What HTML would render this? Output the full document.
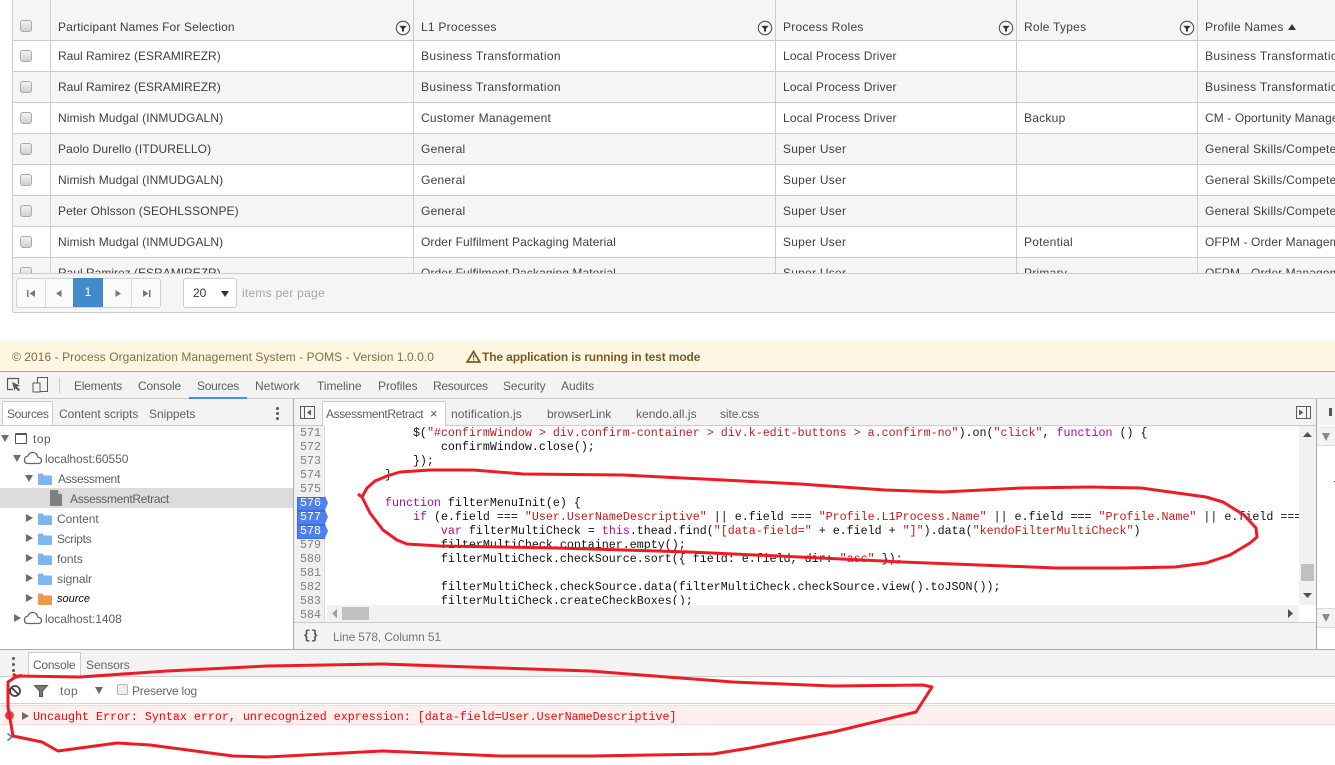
<!DOCTYPE html>
<html><head><meta charset="utf-8"><title>POMS</title>
<style>
html,body{margin:0;padding:0;background:#fff;overflow:hidden}
body{position:relative;width:1335px;height:765px;font-family:"Liberation Sans",Arial,sans-serif;font-size:12px;color:#555}
#w{position:absolute;left:0;top:0;width:1335px;height:765px;overflow:hidden}
.a{position:absolute}
.t{position:absolute;white-space:nowrap;line-height:16px}
.g{font-size:12px;letter-spacing:.25px;color:#3f3f3f}
.g.x0{letter-spacing:0}.g.x1{letter-spacing:.1px}.g.x2{letter-spacing:.15px}.g.x3{letter-spacing:.34px}
.row{position:absolute;left:13px;width:1322px;height:30px;border-bottom:1px solid #ccc}
.alt{background:#f5f5f5}
.v{position:absolute;top:0;width:1px;height:273px;background:#ccc}
.cb{position:absolute;left:20px;width:10px;height:10px;border:1px solid #aaa;border-radius:3px;background:linear-gradient(#f2f2f2,#cfcfcf)}
.d{color:#5f5f5f;font-size:12px;letter-spacing:-.05px}
.e{letter-spacing:-.35px}
.m{font-family:"Liberation Mono",monospace;font-size:11.67px;line-height:14px;white-space:pre;position:absolute;color:#111}
.s{color:#c41a16}.k{color:#aa0d91}
.n{position:absolute;left:294px;width:27px;text-align:right;font-family:"Liberation Mono",monospace;font-size:11.67px;line-height:14px;color:#808080}
.bp{position:absolute;left:297px;width:27px;height:12px;background:#4f80f0;border:1px solid #3a6ce0;border-right:none}
.bt{position:absolute;left:325px;width:0;height:0;border-left:3px solid #4f80f0;border-top:7px solid transparent;border-bottom:7px solid transparent}
.tw{position:absolute;width:0;height:0}
.r{border-left:7px solid #6e6e6e;border-top:4.5px solid transparent;border-bottom:4.5px solid transparent}
.dn{border-top:7px solid #6e6e6e;border-left:4.5px solid transparent;border-right:4.5px solid transparent}
.dot{position:absolute;width:3px;height:3px;border-radius:50%;background:#5a5a5a}
</style></head><body><div id="w">
<svg width="0" height="0" style="position:absolute"><defs>
<symbol id="fi" viewBox="0 0 16 16"><circle cx="8" cy="8" r="6.7" fill="none" stroke="#444" stroke-width="1"/><path d="M4.300 5.900h7.400L9 8.800v2.700H7V8.800z" fill="#333"/></symbol>
<symbol id="fo" viewBox="0 0 14 12"><path d="M0 1.500Q0 .5 1 .5h3.500l1.500 2h7q1 0 1 1V11q0 1-1 1H1q-1 0-1-1z" fill="currentColor"/></symbol>
<symbol id="cl" viewBox="0 0 20 14"><path d="M5 12.500H15Q18.500 12.500 18.500 9.500Q18.500 6.500 15 6.500Q14 1.500 9.500 1.500Q6 1.500 5 5Q1.500 5.500 1.500 9Q1.500 12.500 5 12.500Z" fill="#fff" stroke="#666" stroke-width="1.300"/></symbol>
</defs></svg>

<!-- GRID -->
<div class="a" style="left:12px;top:0;width:1323px;height:40px;background:#f5f5f5;border-bottom:1px solid #ccc"></div>
<div class="row" style="top:41px;background:#fff"></div>
<div class="row alt" style="top:72px"></div>
<div class="row" style="top:103px;background:#fff"></div>
<div class="row alt" style="top:134px"></div>
<div class="row" style="top:165px;background:#fff"></div>
<div class="row alt" style="top:196px"></div>
<div class="row" style="top:227px;background:#fff"></div>
<div class="a" style="left:13px;top:258px;width:1322px;height:15px;background:#f5f5f5"></div>
<div class="v" style="left:12px;height:312px"></div><div class="v" style="left:50px"></div><div class="v" style="left:413px"></div><div class="v" style="left:775px"></div><div class="v" style="left:1016px"></div><div class="v" style="left:1197px"></div>

<div class="cb" style="top:20px"></div><div class="cb" style="top:50px"></div><div class="cb" style="top:81px"></div><div class="cb" style="top:112px"></div><div class="cb" style="top:143px"></div><div class="cb" style="top:174px"></div><div class="cb" style="top:205px"></div><div class="cb" style="top:236px"></div><div class="cb" style="top:267px"></div>

<div class="t g x2" style="left:58px;top:19px">Participant Names For Selection</div>
<div class="t g" style="left:421px;top:19px">L1 Processes</div>
<div class="t g" style="left:783px;top:19px">Process Roles</div>
<div class="t g" style="left:1024px;top:19px">Role Types</div>
<div class="t g" style="left:1205px;top:19px">Profile Names</div>
<svg class="a" style="left:1288px;top:24px" width="8" height="7"><path d="M4 0L8 6H0z" fill="#333"/></svg>
<svg class="a" style="left:395px;top:20px" width="16" height="16"><use href="#fi"/></svg>
<svg class="a" style="left:757px;top:20px" width="16" height="16"><use href="#fi"/></svg>
<svg class="a" style="left:998px;top:20px" width="16" height="16"><use href="#fi"/></svg>
<svg class="a" style="left:1179px;top:20px" width="16" height="16"><use href="#fi"/></svg>

<div class="t g x0" style="left:58px;top:48px">Raul Ramirez (ESRAMIREZR)</div><div class="t g x3" style="left:421px;top:48px">Business Transformation</div><div class="t g x2" style="left:783px;top:48px">Local Process Driver</div><div class="t g x3" style="left:1205px;top:48px">Business Transformation</div>
<div class="t g x0" style="left:58px;top:79px">Raul Ramirez (ESRAMIREZR)</div><div class="t g x3" style="left:421px;top:79px">Business Transformation</div><div class="t g x2" style="left:783px;top:79px">Local Process Driver</div><div class="t g x3" style="left:1205px;top:79px">Business Transformation</div>
<div class="t g x1" style="left:58px;top:110px">Nimish Mudgal (INMUDGALN)</div><div class="t g" style="left:421px;top:110px">Customer Management</div><div class="t g x2" style="left:783px;top:110px">Local Process Driver</div><div class="t g" style="left:1024px;top:110px">Backup</div><div class="t g x1" style="left:1205px;top:110px">CM - Oportunity Management</div>
<div class="t g x1" style="left:58px;top:141px">Paolo Durello (ITDURELLO)</div><div class="t g" style="left:421px;top:141px">General</div><div class="t g" style="left:783px;top:141px">Super User</div><div class="t g" style="left:1205px;top:141px">General Skills/Competences</div>
<div class="t g x1" style="left:58px;top:172px">Nimish Mudgal (INMUDGALN)</div><div class="t g" style="left:421px;top:172px">General</div><div class="t g" style="left:783px;top:172px">Super User</div><div class="t g" style="left:1205px;top:172px">General Skills/Competences</div>
<div class="t g x1" style="left:58px;top:203px">Peter Ohlsson (SEOHLSSONPE)</div><div class="t g" style="left:421px;top:203px">General</div><div class="t g" style="left:783px;top:203px">Super User</div><div class="t g" style="left:1205px;top:203px">General Skills/Competences</div>
<div class="t g x1" style="left:58px;top:234px">Nimish Mudgal (INMUDGALN)</div><div class="t g x1" style="left:421px;top:234px">Order Fulfilment Packaging Material</div><div class="t g" style="left:783px;top:234px">Super User</div><div class="t g" style="left:1024px;top:234px">Potential</div><div class="t g x1" style="left:1205px;top:234px">OFPM - Order Management</div>
<div class="t g x0" style="left:58px;top:265px">Raul Ramirez (ESRAMIREZR)</div><div class="t g x1" style="left:421px;top:265px">Order Fulfilment Packaging Material</div><div class="t g" style="left:783px;top:265px">Super User</div><div class="t g" style="left:1024px;top:265px">Primary</div><div class="t g x1" style="left:1205px;top:265px">OFPM - Order Management</div>

<!-- PAGER -->
<div class="a" style="left:12px;top:273px;width:1323px;height:38px;background:#f5f5f5;border-top:1px solid #ccc;border-bottom:1px solid #ccc;border-left:1px solid #ccc;border-bottom-left-radius:3px"></div>
<div class="a" style="left:16px;top:278px;width:143px;height:28px;background:#fafafa;border:1px solid #d0d0d0;border-radius:3px"></div>
<div class="a" style="left:45px;top:279px;width:1px;height:28px;background:#ddd"></div>
<div class="a" style="left:131px;top:279px;width:1px;height:28px;background:#ddd"></div>
<div class="a" style="left:73px;top:278px;width:30px;height:29px;background:#428bca;color:#fff;text-align:center;line-height:29px">1</div>
<svg class="a" style="left:26px;top:289px" width="12" height="9"><path d="M1 1h1.500v7H1zM9 1v7L3.500 4.500z" fill="#777"/></svg>
<svg class="a" style="left:55px;top:289px" width="9" height="9"><path d="M6.500 1v7L1 4.500z" fill="#777"/></svg>
<svg class="a" style="left:114px;top:289px" width="9" height="9"><path d="M1.500 1v7L7 4.500z" fill="#777"/></svg>
<svg class="a" style="left:141px;top:289px" width="12" height="9"><path d="M2 1v7L7.500 4.500zM8 1h1.500v7H8z" fill="#777"/></svg>
<div class="a" style="left:183px;top:278px;width:52px;height:28px;background:#fff;border:1px solid #ccc;border-radius:3px"></div>
<div class="t" style="left:193px;top:285px;color:#333">20</div>
<div class="tw dn" style="left:221px;top:291px;border-top-color:#333;border-top-width:6px;border-left-width:4px;border-right-width:4px"></div>
<div class="t" style="left:242px;top:285px;color:#a6a6a6;letter-spacing:.25px">items per page</div>

<!-- FOOTER -->
<div class="a" style="left:0;top:341px;width:1335px;height:30px;background:#fcf6e3"></div>
<div class="t" style="left:12px;top:349px;color:#8a6d3b;letter-spacing:.06px">© 2016 - Process Organization Management System - POMS - Version 1.0.0.0</div>
<svg class="a" style="left:466px;top:350px" width="15" height="13"><path d="M7.500 1.500L13.800 12H1.200z" fill="none" stroke="#7a5c2a" stroke-width="1.800"/><path d="M7 5h1.200v3.500H7zM7 9.300h1.200v1.200H7z" fill="#7a5c2a"/></svg>
<div class="t" style="left:482px;top:349px;color:#7a5c2a;font-weight:bold;letter-spacing:-.13px">The application is running in test mode</div>

<!-- DEVTOOLS TOP -->
<div class="a" style="left:0;top:371px;width:1335px;height:1px;background:#a3a3a3"></div>
<div class="a" style="left:0;top:372px;width:1335px;height:26px;background:#f3f3f3"></div>
<div class="a" style="left:0;top:398px;width:1335px;height:1px;background:#ccc"></div>
<svg class="a" style="left:6px;top:377px" width="16" height="16"><path d="M7 12.500H1.500V1.500h11V7" fill="none" stroke="#5a5a5a" stroke-width="1.200"/><path d="M6 5l8 3.500-3 1.200 3 3-1.500 1.500-3-3L8.500 14z" fill="#5a5a5a"/></svg>
<svg class="a" style="left:32px;top:377px" width="17" height="16"><rect x="5.500" y=".5" width="10" height="14" fill="none" stroke="#5a5a5a"/><rect x="1" y="6" width="7" height="9" fill="#f3f3f3" stroke="#5a5a5a"/></svg>
<div class="a" style="left:59px;top:377px;width:1px;height:16px;background:#ccc"></div>
<div class="t d" style="left:74px;top:378px;letter-spacing:-.25px">Elements</div>
<div class="t d" style="left:138px;top:378px;letter-spacing:-.15px">Console</div>
<div class="t d" style="left:197px;top:378px;letter-spacing:-.3px">Sources</div>
<div class="t d" style="left:255px;top:378px;letter-spacing:.1px">Network</div>
<div class="t d" style="left:317px;top:378px">Timeline</div>
<div class="t d" style="left:378px;top:378px">Profiles</div>
<div class="t d" style="left:433px;top:378px;letter-spacing:-.3px">Resources</div>
<div class="t d" style="left:503px;top:378px;letter-spacing:-.1px">Security</div>
<div class="t d" style="left:561px;top:378px">Audits</div>
<div class="a" style="left:189px;top:397px;width:58px;height:2px;background:#4b8bf0"></div>

<!-- SECOND BAR -->
<div class="a" style="left:0;top:399px;width:1335px;height:26px;background:#f3f3f3"></div>
<div class="a" style="left:0;top:425px;width:1317px;height:1px;background:#ccc"></div>
<div class="a" style="left:2px;top:401px;width:51px;height:24px;background:#fff;border:1px solid #ccc;border-bottom:none;box-sizing:border-box"></div>
<div class="t d e" style="left:7px;top:406px">Sources</div>
<div class="t d" style="left:59px;top:406px">Content scripts</div>
<div class="t d" style="left:149px;top:406px">Snippets</div>
<div class="dot" style="left:276px;top:407px"></div><div class="dot" style="left:276px;top:412px"></div><div class="dot" style="left:276px;top:417px"></div>
<svg class="a" style="left:300px;top:406px" width="16" height="14"><rect x=".5" y=".5" width="14" height="12" fill="none" stroke="#5a5a5a"/><path d="M4.500 1v11" stroke="#5a5a5a"/><path d="M11 3.500v6L7 6.500z" fill="#5a5a5a"/></svg>
<div class="a" style="left:322px;top:401px;width:124px;height:25px;background:#fff;border:1px solid #ccc;border-bottom:none;box-sizing:border-box"></div>
<div class="t d" style="left:326px;top:406px;letter-spacing:-.4px">AssessmentRetract</div>
<div class="t" style="left:430px;top:406px;color:#555;font-size:13px">×</div>
<div class="t d" style="left:451px;top:406px;letter-spacing:.1px">notification.js</div>
<div class="t d" style="left:547px;top:406px">browserLink</div>
<div class="t d" style="left:636px;top:406px;letter-spacing:.05px">kendo.all.js</div>
<div class="t d" style="left:720px;top:406px;letter-spacing:-.1px">site.css</div>
<svg class="a" style="left:1296px;top:406px" width="16" height="14"><rect x=".5" y=".5" width="14" height="12" fill="none" stroke="#5a5a5a"/><path d="M10.500 1v11" stroke="#5a5a5a"/><path d="M3 3.500v6l4.500-3z" fill="#5a5a5a"/></svg>

<!-- NAV TREE -->
<div class="a" style="left:293px;top:399px;width:1px;height:250px;background:#a9a9a9"></div>
<div class="a" style="left:0;top:488px;width:293px;height:20px;background:#dcdcdc"></div>
<div class="tw dn" style="left:1px;top:435px"></div>
<div class="a" style="left:15px;top:433px;width:10px;height:8px;border:1.500px solid #555;border-top-width:2.500px;border-radius:1px;background:#fff"></div>
<div class="t d" style="left:33px;top:431px;letter-spacing:.5px">top</div>
<div class="tw dn" style="left:13px;top:455px"></div>
<svg class="a" style="left:23px;top:451px" width="20" height="14"><use href="#cl"/></svg>
<div class="t d" style="left:45px;top:451px">localhost:60550</div>
<div class="tw dn" style="left:25px;top:475px"></div>
<svg class="a" style="left:38px;top:473px;color:#7db6f2" width="14" height="12"><use href="#fo"/></svg>
<div class="t d e" style="left:58px;top:471px">Assessment</div>
<svg class="a" style="left:50px;top:490px" width="12" height="16"><path d="M0 1Q0 0 1 0H8L12 4V15Q12 16 11 16H1Q0 16 0 15Z" fill="#808080"/><path d="M8 0L12 4H8Z" fill="#c8c8c8"/></svg>
<div class="t d" style="left:70px;top:491px;letter-spacing:-.3px">AssessmentRetract</div>
<div class="tw r" style="left:26px;top:514px"></div><svg class="a" style="left:38px;top:513px;color:#7db6f2" width="14" height="12"><use href="#fo"/></svg><div class="t d" style="left:57px;top:511px">Content</div>
<div class="tw r" style="left:26px;top:534px"></div><svg class="a" style="left:38px;top:533px;color:#7db6f2" width="14" height="12"><use href="#fo"/></svg><div class="t d e" style="left:57px;top:531px">Scripts</div>
<div class="tw r" style="left:26px;top:554px"></div><svg class="a" style="left:38px;top:553px;color:#7db6f2" width="14" height="12"><use href="#fo"/></svg><div class="t d" style="left:57px;top:551px">fonts</div>
<div class="tw r" style="left:26px;top:574px"></div><svg class="a" style="left:38px;top:573px;color:#7db6f2" width="14" height="12"><use href="#fo"/></svg><div class="t d" style="left:57px;top:571px">signalr</div>
<div class="tw r" style="left:26px;top:594px"></div><svg class="a" style="left:38px;top:593px;color:#e99a4f" width="14" height="12"><use href="#fo"/></svg><div class="t" style="left:57px;top:591px;color:#111;font-style:italic;font-size:11px">source</div>
<div class="tw r" style="left:14px;top:614px"></div><svg class="a" style="left:23px;top:611px" width="20" height="14"><use href="#cl"/></svg><div class="t d" style="left:45px;top:611px">localhost:1408</div>

<!-- GUTTER -->
<div class="a" style="left:294px;top:426px;width:30px;height:196px;background:#f0f0f0;border-right:1px solid #ddd"></div>
<div class="bp" style="top:497px"></div><div class="bt" style="top:496px"></div>
<div class="bp" style="top:511px"></div><div class="bt" style="top:510px"></div>
<div class="bp" style="top:525px"></div><div class="bt" style="top:524px"></div>
<div class="n" style="top:426px">571</div><div class="n" style="top:440px">572</div><div class="n" style="top:454px">573</div><div class="n" style="top:468px">574</div><div class="n" style="top:482px">575</div>
<div class="n" style="top:496px;color:#fff">576</div><div class="n" style="top:510px;color:#fff">577</div><div class="n" style="top:524px;color:#fff">578</div>
<div class="n" style="top:538px">579</div><div class="n" style="top:552px">580</div><div class="n" style="top:566px">581</div><div class="n" style="top:580px">582</div><div class="n" style="top:594px">583</div><div class="n" style="top:608px">584</div>

<!-- CODE -->
<div class="a" style="left:329px;top:426px;width:970px;height:179px;overflow:hidden;background:#fff">
<div class="m" style="left:0;top:0">            $(<span class="s">"#confirmWindow &gt; div.confirm-container &gt; div.k-edit-buttons &gt; a.confirm-no"</span>).on(<span class="s">"click"</span>, <span class="k">function</span> () {</div>
<div class="m" style="left:0;top:14px">                confirmWindow.close();</div>
<div class="m" style="left:0;top:28px">            });</div>
<div class="m" style="left:0;top:42px">        }</div>
<div class="m" style="left:0;top:70px">        <span class="k">function</span> filterMenuInit(e) {</div>
<div class="m" style="left:0;top:84px">            <span class="k">if</span> (e.field === <span class="s">"User.UserNameDescriptive"</span> || e.field === <span class="s">"Profile.L1Process.Name"</span> || e.field === <span class="s">"Profile.Name"</span> || e.field ===</div>
<div class="m" style="left:0;top:98px">                <span class="k">var</span> filterMultiCheck = <span class="k">this</span>.thead.find(<span class="s">"[data-field="</span> + e.field + <span class="s">"]"</span>).data(<span class="s">"kendoFilterMultiCheck"</span>)</div>
<div class="m" style="left:0;top:112px">                filterMultiCheck.container.empty();</div>
<div class="m" style="left:0;top:126px">                filterMultiCheck.checkSource.sort({ field: e.field, dir: <span class="s">"asc"</span> });</div>
<div class="m" style="left:0;top:154px">                filterMultiCheck.checkSource.data(filterMultiCheck.checkSource.view().toJSON());</div>
<div class="m" style="left:0;top:168px">                filterMultiCheck.createCheckBoxes();</div>
</div>

<!-- SCROLLBARS -->
<div class="a" style="left:1299px;top:426px;width:17px;height:179px;background:#f1f1f1"></div>
<div class="a" style="left:1301px;top:564px;width:13px;height:17px;background:#c1c1c1"></div>
<svg class="a" style="left:1303px;top:432px" width="9" height="6"><path d="M4.500 0L9 5H0z" fill="#505050"/></svg>
<svg class="a" style="left:1303px;top:593px" width="9" height="6"><path d="M4.500 5L9 0H0z" fill="#505050"/></svg>
<div class="a" style="left:327px;top:605px;width:972px;height:17px;background:#f1f1f1"></div>
<div class="a" style="left:342px;top:607px;width:27px;height:13px;background:#c1c1c1"></div>
<svg class="a" style="left:332px;top:609px" width="6" height="9"><path d="M0 4.500L5 0V9z" fill="#a0a0a0"/></svg>
<svg class="a" style="left:1288px;top:609px" width="6" height="9"><path d="M5 4.500L0 0V9z" fill="#505050"/></svg>

<!-- STATUS -->
<div class="a" style="left:294px;top:622px;width:1023px;height:1px;background:#ccc"></div>
<div class="a" style="left:294px;top:623px;width:1023px;height:26px;background:#f3f3f3"></div>
<div class="t" style="left:303px;top:628px;color:#555;font-family:'Liberation Mono',monospace;font-weight:bold;font-size:13px">{}</div>
<div class="t d" style="left:333px;top:629px;color:#777;letter-spacing:-.15px">Line 578, Column 51</div>

<!-- RIGHT PANE -->
<div class="a" style="left:1316px;top:399px;width:1px;height:250px;background:#a9a9a9"></div>
<div class="a" style="left:1317px;top:426px;width:18px;height:19px;background:#f3f3f3;border-bottom:1px solid #ddd"></div>
<div class="a" style="left:1317px;top:608px;width:18px;height:18px;background:#f3f3f3;border-top:1px solid #ddd;border-bottom:1px solid #ddd"></div>
<div class="a" style="left:1329px;top:408px;width:3px;height:8px;background:#555"></div>
<div class="tw dn" style="left:1322px;top:433px;border-top-width:8px;border-left-width:4.500px;border-right-width:4.500px;border-top-color:#8a8a8a"></div>
<div class="tw dn" style="left:1322px;top:614px;border-top-width:8px;border-left-width:4.500px;border-right-width:4.500px;border-top-color:#8a8a8a"></div>
<div class="a" style="left:1334px;top:481px;width:1px;height:1px;background:#aa0d91"></div>

<!-- DRAWER -->
<div class="a" style="left:0;top:649px;width:1335px;height:1px;background:#a9a9a9"></div>
<div class="a" style="left:0;top:650px;width:1335px;height:26px;background:#f3f3f3"></div>
<div class="a" style="left:0;top:676px;width:1335px;height:1px;background:#ccc"></div>
<div class="dot" style="left:12px;top:657px"></div><div class="dot" style="left:12px;top:663px"></div><div class="dot" style="left:12px;top:669px"></div>
<div class="a" style="left:28px;top:652px;width:53px;height:25px;background:#fff;border:1px solid #ccc;border-bottom:none;box-sizing:border-box"></div>
<div class="t d" style="left:33px;top:657px;letter-spacing:-.25px">Console</div>
<div class="t d" style="left:86px;top:657px;color:#666">Sensors</div>

<svg class="a" style="left:8px;top:684px" width="14" height="14"><circle cx="7" cy="7" r="5" fill="none" stroke="#444" stroke-width="1.800"/><path d="M3.500 3.500l7 7" stroke="#444" stroke-width="1.800"/></svg>
<svg class="a" style="left:34px;top:685px" width="15" height="12"><path d="M.5.500h13L8.500 6v5.500h-3V6z" fill="#777" stroke="#555"/></svg>
<div class="t d" style="left:60px;top:683px;color:#666;letter-spacing:.5px">top</div>
<div class="tw dn" style="left:95px;top:687px;border-top-color:#666"></div>
<div class="a" style="left:117px;top:684px;width:9px;height:9px;border:1px solid #b4b4b4;border-radius:2px;background:#eee"></div>
<div class="t d" style="left:132px;top:683px;color:#666;letter-spacing:-.2px">Preserve log</div>
<div class="a" style="left:0;top:703px;width:1335px;height:1px;background:#d4d4d4"></div>
<div class="a" style="left:0;top:705px;width:1335px;height:20px;background:#fff0f0;border-top:1px solid #f9d9d9;border-bottom:1px solid #f9d9d9;box-sizing:border-box"></div>
<div class="a" style="left:5px;top:711px;width:9px;height:9px;border-radius:50%;background:#e0434c"></div>
<div class="tw r" style="left:22px;top:712px"></div>
<div class="m" style="left:33px;top:710px;color:#f00">Uncaught Error: Syntax error, unrecognized expression: [data-field=User.UserNameDescriptive]</div>
<svg class="a" style="left:6px;top:732px" width="8" height="10"><path d="M1.500 1.500L6 5 1.500 8.500" fill="none" stroke="#367cf1" stroke-width="1.500"/></svg>

<!-- RED ANNOTATIONS -->
<svg class="a" style="left:0;top:0;pointer-events:none" width="1335" height="765">
<path d="M358 494L362 497L367 488L375 481L387 476L400 472L430 470L473 470L523 474L623 475L723 480L800 484L885 490L943 492L1022 488L1090 487L1141 488L1206 497L1223 502L1244 515L1256 528L1257 537L1250 543L1230 555L1206 563L1175 567L1124 568L1056 568L1005 566L902 562L800 557L690 552L557 548L440 546L407 544L397 540L383 530L370 513L362 497" fill="none" stroke="#ed1c24" stroke-width="3" stroke-linejoin="round"/>
<path d="M13 674L17 677L22 675M17 676L80 677L167 671L267 666L383 664L500 668L590 671L667 677L733 682L833 686L923 685L932 687L916 712L833 732L750 748L713 754L593 756L500 756L383 751L267 757L233 756L150 745L117 743L58 751L42 742L13 736L8 707L8 682L17 676" fill="none" stroke="#ed1c24" stroke-width="3" stroke-linejoin="round"/>
</svg>
</div></body></html>
